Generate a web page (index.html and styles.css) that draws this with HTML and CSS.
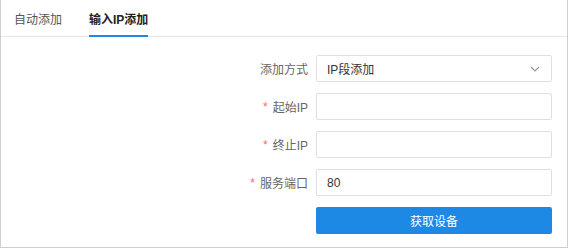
FILE: index.html
```html
<!DOCTYPE html>
<html lang="zh-CN">
<head>
  <meta charset="UTF-8">
  <meta name="viewport" content="width=device-width, initial-scale=1.0">
  <title>添加设备</title>
  <link rel="stylesheet" href="styles.css">
</head>
<body>
  <div class="panel">
    <div class="tabs">
      <div class="tab">自动添加</div>
      <div class="tab active">输入IP添加</div>
    </div>
    <form class="form">
      <label class="label">添加方式</label>
      <div class="select">
        <span>IP段添加</span>
        <svg class="chevron" width="10" height="6" viewBox="0 0 10 6">
          <path d="M1 1l4 4 4-4" fill="none" stroke="#999" stroke-width="1.2"/>
        </svg>
      </div>

      <label class="label"><span class="req">*</span>起始IP</label>
      <input class="input" type="text">

      <label class="label"><span class="req">*</span>终止IP</label>
      <input class="input" type="text">

      <label class="label"><span class="req">*</span>服务端口</label>
      <input class="input" type="text" value="80">

      <span></span>
      <button class="submit" type="button">获取设备</button>
    </form>
  </div>
</body>
</html>
```

FILE: styles.css
```css
body {
  margin: 0;
  font-family: "Liberation Sans", "Noto Sans CJK SC", sans-serif;
  font-size: 12px;
  color: #333;
  background: #fff;
}

.panel {
  width: 568px;
  height: 248px;
  box-sizing: border-box;
  border: 1px solid #cfcfcf;
  border-top: none;
}

.tabs {
  display: flex;
  gap: 27px;
  height: 36px;
  padding-left: 13px;
  border-bottom: 1px solid #e6e6e6;
}

.tab {
  display: flex;
  align-items: center;
  height: 36px;
  box-sizing: border-box;
  color: #555;
  font-size: 12px;
  padding-top: 1px;
}

.tab.active {
  color: #222;
  font-weight: bold;
  border-bottom: 2px solid #1e88e5;
  margin-bottom: -1px;
  height: 37px;
}

.form {
  display: grid;
  grid-template-columns: 300px 236px;
  column-gap: 8px;
  row-gap: 11px;
  margin: 18px 0 0 7px;
}

.label {
  display: flex;
  align-items: center;
  justify-content: flex-end;
  color: #666;
}

.req {
  color: #f56c6c;
  margin-right: 5px;
}

.select,
.input {
  height: 27px;
  box-sizing: border-box;
  border: 1px solid #dcdfe6;
  border-radius: 2px;
  font-family: inherit;
  font-size: 12px;
  color: #333;
  padding: 0 10px;
  outline: none;
}

.select {
  display: flex;
  align-items: center;
  justify-content: space-between;
  padding-right: 11px;
}

.chevron {
  display: block;
}

.submit {
  height: 27px;
  border: none;
  border-radius: 2px;
  background: #1e88e5;
  color: #fff;
  font-family: inherit;
  font-size: 12px;
  cursor: pointer;
}
```
